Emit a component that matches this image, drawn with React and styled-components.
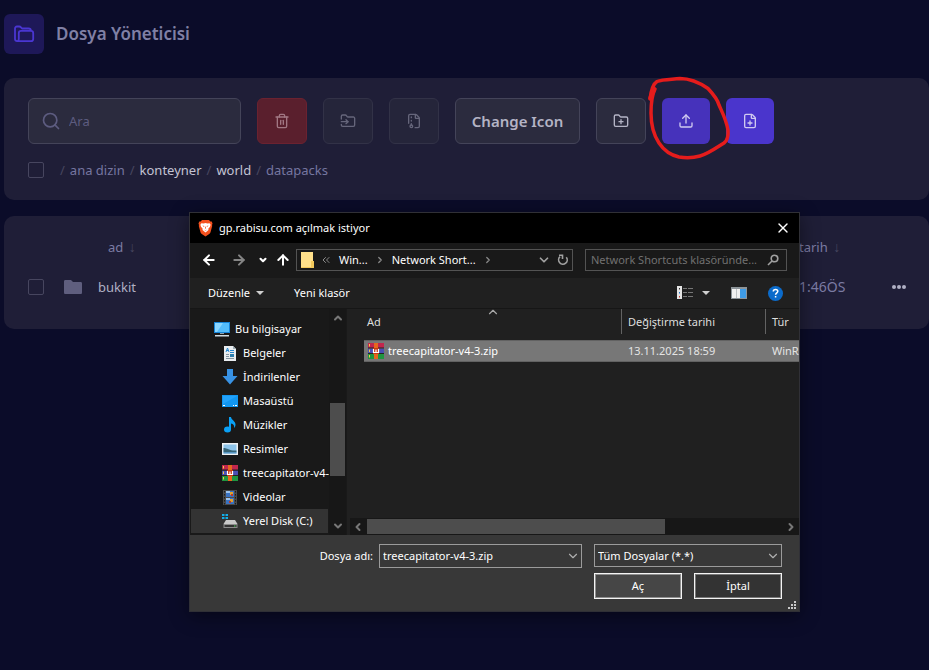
import React, { useState } from "react";
import styled, { createGlobalStyle } from "styled-components";
import {
  ArrowLeft, ArrowRight, ArrowUp, ChevronDown, ChevronLeft, ChevronRight, ChevronUp,
  ChevronsLeft, FileArchive, FilePlus, FolderInput, FolderPlus, RotateCw, Search, Trash2, Upload, X,
} from "lucide-react";

const GlobalStyle = createGlobalStyle`
* { box-sizing: border-box; }
body {
    margin: 0;
    background: #0b0c29;
    color: #b9b9cd;
    font-family: 'Noto Sans', 'Open Sans', sans-serif;
    font-size: 13px;
}
button, input, select { font: inherit; color: inherit; margin: 0; padding: 0; }
a { color: inherit; text-decoration: none; }
svg { display: block; flex: none; }
`;

const Page = styled.main`
position: relative;
min-height: 100vh;
padding: 14px 0 0 4px;
overflow: hidden;
`;

const Header = styled.header`
display: flex;
align-items: center;
gap: 12px;
margin-bottom: 24px;
`;

const HeaderIcon = styled.div`
display: flex;
align-items: center;
justify-content: center;
width: 40px;
height: 40px;
border-radius: 6px;
background: #1e1858;
color: #4a36d2;
`;

const Title = styled.h1`
margin: 0;
font-size: 17px;
font-weight: 600;
line-height: 24px;
color: #8080a5;
`;

const Card = styled.section`
margin-bottom: 16px;
border-radius: 10px;
background: #1f1e37;
padding: ${(props) => props.$pad};
`;

const Toolbar = styled.div`
display: flex;
gap: 16px;
margin-bottom: 16px;
`;

const SearchBox = styled.label`
display: flex;
align-items: center;
gap: 8px;
width: 213px;
height: 46px;
padding: 0 12px;
border: 1px solid #444459;
border-radius: 6px;
background: #2b2b3e;
color: #5d5c80;
`;

const SearchInput = styled.input`
flex: 1;
min-width: 0;
border: 0;
outline: 0;
background: transparent;
&::placeholder{ color: #5d5c80; opacity: 1; }
`;

const kinds = {
  danger: "background: #5a1f2d; border: 1px solid #6b2230; color: #a17783;",
  muted: "background: #25253a; border: 1px solid #323247; color: #66667b;",
  plain: "background: #2b2b3e; border: 1px solid #444459; color: #b4b4c5;",
  active: "background: #4632bb; border: 0; color: #d0caf0;",
  primary: "background: #4a35cc; border: 0; color: #d0caf0;",
};

const ToolButton = styled.button`
display: flex;
align-items: center;
justify-content: center;
width: ${(props) => props.$width || "50px"};
height: 46px;
border-radius: 6px;
font-size: 15px;
font-weight: 600;
${(props) => kinds[props.$kind]}
`;

const PathRow = styled.div`
display: flex;
align-items: center;
gap: 16px;
height: 20px;
`;

const Check = styled.input`
appearance: none;
display: block;
width: 16px;
height: 16px;
border: 1px solid #47465f;
border-radius: 2px;
background: transparent;
`;

const Crumbs = styled.nav`
display: flex;
gap: 5px;
line-height: 20px;
color: #47465f;
`;

const Crumb = styled.a`
color: ${(props) => (props.$strong ? "#c3c3d3" : "#7676a0")};
`;

const FileTable = styled.table`
width: 100%;
table-layout: fixed;
border-collapse: collapse;
th, td { padding: 0; text-align: left; font-weight: 400; color: #7b7ba3; }
th { height: 36px; }
td { height: 45px; font-size: 14px; }
th.name { padding-left: 10px; }
td.name { font-size: 13px; color: #b0b0c4; }
i { margin-left: 2px; font-size: 14px; font-style: normal; color: #47465f; }
`;

const DotsButton = styled.button`
display: flex;
border: 0;
background: transparent;
color: #b0b0c4;
margin-left: 23px;
`;

/* ---- file dialog ---- */

const Dialog = styled.section`
position: absolute;
left: 189px;
top: 212px;
width: 611px;
border: 1px solid #303036;
background: #191919;
color: #fff;
font-size: 11px;
line-height: 16px;
box-shadow: 0 4px 18px rgba(0,0,0,0.45);
`;

const TitleBar = styled.header`
display: flex;
align-items: center;
gap: 6px;
height: 30px;
padding: 0 8px;
background: #000;
`;

const DialogTitle = styled.h2`
flex: 1;
margin: 0;
font-size: 11px;
font-weight: 400;
`;

const BareButton = styled.button`
display: flex;
align-items: center;
gap: 6px;
border: 0;
background: transparent;
color: ${(props) => props.$color || "#fff"};
`;

const NavBar = styled.div`
display: flex;
align-items: center;
height: 35px;
padding: 0 12px 2px 11px;
gap: 12px;
`;

const NavArrows = styled.div`
display: grid;
grid-template-columns: 30px 27px 17px 21px;
align-items: center;
margin-right: -12px;
`;

const Address = styled.div`
display: flex;
align-items: center;
flex: 1;
gap: 6px;
height: 22px;
padding: 0 3px;
border: 1px solid #535353;
color: #8a8a8a;
`;

const AddressPath = styled.div`
display: flex;
align-items: center;
flex: 1;
gap: 7px;
`;

const DialogSearch = styled.label`
display: flex;
align-items: center;
width: 202px;
height: 22px;
padding: 0 7px 0 5px;
border: 1px solid #535353;
color: #a0a0a0;
`;

const DialogSearchInput = styled.input`
flex: 1;
min-width: 0;
border: 0;
outline: 0;
background: transparent;
&::placeholder{ color: #717171; opacity: 1; }
`;

const CommandBar = styled.div`
display: flex;
align-items: center;
height: 31px;
padding: 0 16px 0 18px;
border-bottom: 1px solid #161616;
background: #202020;
`;

const CommandGroup = styled.div`
display: flex;
align-items: center;
gap: ${(props) => props.$gap};
&:first-child{ flex: 1; }
`;

const Body = styled.div`
display: flex;
height: 226px;
`;

const Side = styled.ul`
width: 139px;
margin: 0;
padding: 8px 1px 0 1px;
list-style: none;
overflow: hidden;
`;

const SideItem = styled.li`
display: flex;
align-items: center;
gap: 5px;
height: 24px;
padding-left: ${(props) => (props.$root ? "23px" : "31px")};
white-space: nowrap;
background: ${(props) => (props.$selected ? "#333" : "transparent")};
`;

const SideScroll = styled.div`
display: flex;
flex-direction: column;
align-items: center;
justify-content: space-between;
width: 17px;
padding: 3px 0;
background: #171717;
color: #777;
`;

const SideThumb = styled.div`
width: 15px;
height: 73px;
margin-top: 73px;
margin-bottom: 39px;
background: #4d4d4d;
`;

const Pane = styled.div`
flex: 1;
min-width: 0;
display: flex;
flex-direction: column;
margin-left: 1px;
border-left: 3px solid #202020;
background: #202020;
`;

const PaneFiles = styled.div`
position: relative;
flex: 1;
padding-left: 14px;
overflow: hidden;
`;

const SortMark = styled.span`
position: absolute;
left: 136px;
top: -4px;
color: #a8a8a8;
`;

const PaneTable = styled.table`
width: 100%;
table-layout: fixed;
border-collapse: collapse;
th, td { padding: 0; text-align: left; font-weight: 400; white-space: nowrap; overflow: hidden; }
th { padding-bottom: 6px; color: #dedede; }
td { height: 21px; padding-left: 7px; background: #777; color: #e4e4e4; border: solid #626262; border-width: 1px 0; }
td:first-child { padding-left: 4px; color: #fff; }
`;

const HeadCell = styled.div`
height: 25px;
line-height: 25px;
padding-left: ${(props) => (props.$first ? "3px" : "6px")};
border-left: ${(props) => (props.$first ? "0" : "1px solid #636363")};
`;

const FileName = styled.div`
display: flex;
align-items: center;
gap: 4px;
`;

const PaneScroll = styled.div`
display: flex;
align-items: center;
height: 17px;
padding: 0 2px;
background: #171717;
color: #777;
`;

const PaneThumb = styled.div`
width: 298px;
height: 15px;
margin: 0 auto 0 3px;
background: #4d4d4d;
`;

const Footer = styled.footer`
display: grid;
gap: 5px;
padding: 9px 17px 12px;
background: #383838;
`;

const FooterRow = styled.div`
display: flex;
align-items: flex-start;
justify-content: flex-end;
gap: 12px;
`;

const NameField = styled.div`
display: flex;
align-items: center;
gap: 6px;
`;

const Combo = styled.div`
display: flex;
align-items: center;
width: ${(props) => props.$width};
height: ${(props) => props.$height};
padding: 0 1px 0 3px;
border: 1px solid #9b9b9b;
background: #383838;
color: #fff;
svg { color: #b0b0b0; }
input, select { flex: 1; min-width: 0; border: 0; outline: 0; background: transparent; appearance: none; }
`;

const DialogButton = styled.button`
width: 88px;
height: 26px;
border: 1px solid #f4f4f4;
box-shadow: inset 0 0 0 1px ${(props) => (props.$main ? "#8e8e8e" : "#777")};
background: ${(props) => (props.$main ? "#464646" : "#333")};
`;

const Grip = styled.svg`
position: absolute;
right: 3px;
bottom: 2px;
`;

const Marker = styled.svg`
position: absolute;
left: 640px;
top: 70px;
pointer-events: none;
`;

function FoldersIcon() {
  return (
    <svg width="22" height="18" viewBox="0 0 22 18" fill="none" stroke="currentColor" strokeWidth="1.8" strokeLinejoin="round">
      <path d="M4.5 16.2C2.6 16.2 2 15.4 2 14V3.5C2 2.3 2.7 1.5 4 1.5h2.2c.8 0 1.3.3 1.8.9l1 1.1h6.5c1.4 0 2.4.8 2.4 2.1" />
      <path d="M5.8 8c0-1.4.8-2.2 2.2-2.2h10c1.4 0 2.2.8 2.2 2.2v6c0 1.4-.8 2.2-2.2 2.2H4.5c.9-.3 1.3-1 1.3-2.2z" />
    </svg>
  );
}

function BraveIcon() {
  return (
    <svg width="15" height="18" viewBox="0 0 15 18">
      <path fill="#f4511e" d="M4 1h7l1.3 1.5 1.4-.1.8 2.2-.5 1.3.2 1.2-1.7 6.2c-.2.8-.7 1.3-1.3 1.8L7.5 17.5l-3.7-2.4c-.6-.5-1.1-1-1.3-1.8L.8 7.1 1 5.9.5 4.6 1.3 2.4l1.4.1z" />
      <path fill="#fff" d="m3.4 4.2 2.2.3 1.9-.4 1.9.4 2.2-.3 1 1.5-.6 2-1.7 2 .2 1.4-3 2.4-3-2.4.2-1.4-1.7-2-.6-2z" />
      <path fill="#f4511e" d="m4.4 6.5 2 .5-.4 1zM10.6 6.5l-2 .5.4 1zM7.5 7l.6 2.3-.6.5-.6-.5zM5.8 10.5l1.7.8 1.7-.8-1.7 1.3z" />
    </svg>
  );
}

function RarIcon() {
  return (
    <svg width="16" height="16" viewBox="0 0 16 16">
      <path fill="#c2274d" d="M0 0h16v5H0z" />
      <path fill="#4a4fb5" d="M0 5.5h16v5H0z" />
      <path fill="#1f9640" d="M0 11h16v5H0z" />
      <path fill="#242424" d="M0 4.6h16v1H0zM0 10h16v1H0z" />
      <path fill="#e6671e" d="M6 0h4v16H6z" />
      <path fill="#f4c945" d="M1 1h1v2.5H1zM1 6.5h1V9H1zM1 12h1v2.5H1z" />
      <path fill="#c63a13" d="M5 5h6v6H5z" />
      <path d="M5.5 6v3.5h5V6M8 6.5v3" fill="none" stroke="#fff" strokeWidth="1.2" />
    </svg>
  );
}

const sideIcons = {
  pc: (
    <>
      <path fill="#1685d9" d="M0 1h16v11H0z" />
      <path fill="#54bdfb" d="M1 2h14v9H1z" />
      <path fill="#8ad6ff" d="M1 2h8L3 11H1z" />
      <path fill="#8da2ae" d="M6 12h4v1H6z" />
      <path fill="#cfdbe2" d="M1 14h14v1.5H1z" />
    </>
  ),
  doc: (
    <>
      <path fill="#e9edf0" d="M2 1h9l3 3v12H2z" />
      <path fill="#a0afb8" d="m11 1 3 3h-3z" />
      <path d="m4 7 1.5-4L7 7M4.5 5.5h2M8 5.5h4M8 7.5h4" fill="none" stroke="#2386cf" />
      <path d="M4 9.5h3M4 11.5h3M4 13.5h8" stroke="#8294a0" />
      <path fill="#2e7fae" d="M8 9h4v3H8z" />
    </>
  ),
  down: <path fill="#3892e4" d="M5 0h6v7h4.500L8 15.500.500 7H5z" />,
  desktop: (
    <>
      <path fill="#1296f0" d="M0 2h16v12H0z" />
      <path fill="#22a2fb" d="M1 3h14L1 11z" />
      <path d="M1 12.5h2M11 12.5h1M13 12.5h2" stroke="#fff" />
    </>
  ),
  music: (
    <>
      <ellipse cx="5.5" cy="12.5" rx="3.5" ry="3" fill="#0aa0f5" />
      <path fill="#0aa0f5" d="M7 0h2c.3 3 4.5 4 4.5 7.500 0 1.500-.5 2.500-1.500 3.500.5-2.500-.5-4-3-4.500v6H7z" />
    </>
  ),
  image: (
    <>
      <path fill="#eef1f3" d="M0 2h16v12H0z" />
      <path fill="#8dc4ea" d="M1.5 3.5h13v9h-13z" />
      <path fill="#376577" d="M1.5 7c4 0 6 3 13 2.5V11h-13z" />
      <path fill="#5796c2" d="M1.5 11h13v1.5h-13z" />
    </>
  ),
  video: (
    <>
      <path fill="#4b4b4b" d="M1 1h14v15H1z" />
      <path d="M2.5 2v14M13.5 2v14" stroke="#1b1b1b" strokeDasharray="1.5 1.5" />
      <path fill="#3a73c2" d="M4 2h8v6H4zM4 9h8v6H4z" />
      <path fill="#9cc3ee" d="M4 2h4v2H4zM4 9h4v2H4z" />
      <path fill="#e2a22b" d="M8 3h3v3H8zM8 10h3v3H8z" />
      <path fill="#ba3c2e" d="M9 5h2v2H9zM7 12h2v2H7z" />
    </>
  ),
  disk: (
    <>
      <path fill="#13aee8" d="M0 1h2.5v2H0zM3.5 1H6v2H3.5zM0 4h2.5v2H0zM3.5 4H6v2H3.5z" />
      <path fill="#c9c9c9" d="M4 7h9l2.5 4H1.5z" />
      <path fill="#8b8b8b" d="M1.5 11h14v4h-14z" />
      <path fill="#333" d="M2.5 12h12v2h-12z" />
      <path fill="#4fd35c" d="M12 12.5h1.5v1H12z" />
    </>
  ),
};

const places = [
  ["pc", "Bu bilgisayar"],
  ["doc", "Belgeler"],
  ["down", "İndirilenler"],
  ["desktop", "Masaüstü"],
  ["music", "Müzikler"],
  ["image", "Resimler"],
  ["rar", "treecapitator-v4-3.zip"],
  ["video", "Videolar"],
  ["disk", "Yerel Disk (C:)"],
];

const Caret = () => (
  <svg width="8" height="4" viewBox="0 0 8 4"><path fill="#cfcfcf" d="M0 0h8L4 4z" /></svg>
);

function FileDialog() {
  const [name, setName] = useState("treecapitator-v4-3.zip");

  return (
    <Dialog role="dialog" aria-labelledby="dialog-title">
      <TitleBar>
        <BraveIcon />
        <DialogTitle id="dialog-title">gp.rabisu.com açılmak istiyor</DialogTitle>
        <BareButton aria-label="Kapat">
          <X size={16} strokeWidth={2} />
        </BareButton>
      </TitleBar>

      <NavBar>
        <NavArrows>
          <BareButton aria-label="Geri"><ArrowLeft size={16} strokeWidth={3} /></BareButton>
          <BareButton aria-label="İleri" $color="#858585"><ArrowRight size={16} strokeWidth={3} /></BareButton>
          <BareButton aria-label="Son konumlar"><ChevronDown size={10} strokeWidth={5} /></BareButton>
          <BareButton aria-label="Yukarı"><ArrowUp size={16} strokeWidth={3} /></BareButton>
        </NavArrows>
        <Address>
          <svg width="14" height="16" viewBox="0 0 14 16">
            <path fill="#ffe08a" d="M1 0h12v16H1z" />
            <path fill="#f2c85b" d="M11 9h3v7H1v-1h10z" />
          </svg>
          <AddressPath>
            <ChevronsLeft size={12} />
            <BareButton>Win...</BareButton>
            <ChevronRight size={10} strokeWidth={3} />
            <BareButton>Network Short...</BareButton>
            <ChevronRight size={10} strokeWidth={3} />
          </AddressPath>
          <BareButton aria-label="Önceki konumlar" $color="#a0a0a0"><ChevronDown size={14} strokeWidth={3} /></BareButton>
          <BareButton aria-label="Yenile" $color="#a0a0a0">
            <svg width="12" height="12" viewBox="0 0 12 12" fill="none" stroke="currentColor" strokeWidth="1.6">
              <path d="M3 2.7A4.300 4.300 0 1 0 9.300 3.200" />
              <path d="M2 1.300h3.500V5" />
            </svg>
          </BareButton>
        </Address>
        <DialogSearch>
          <DialogSearchInput aria-label="Klasörde ara" placeholder="Network Shortcuts klasöründe..." />
          <svg width="12" height="12" viewBox="0 0 12 12" fill="none" stroke="currentColor" strokeWidth="1.6">
            <circle cx="7.5" cy="4.5" r="3.3" />
            <path d="M5 7 1 11" />
          </svg>
        </DialogSearch>
      </NavBar>

      <CommandBar>
        <CommandGroup $gap="30px">
          <BareButton>Düzenle <Caret /></BareButton>
          <BareButton>Yeni klasör</BareButton>
        </CommandGroup>
        <CommandGroup $gap="21px">
          <BareButton aria-label="Görünüm">
            <svg width="19" height="14" viewBox="0 0 19 14">
              <path fill="#e5e5e5" d="M0 0h5v13H0z" />
              <path d="M6 2.5h4M11 2.5h5M6 6.5h4M11 6.5h5M6 10.5h4M11 10.5h5" stroke="#777" />
              <path fill="#333" d="M2 2h1v1.500H2z" />
              <path fill="#2874c8" d="M2 6h1v1.500H2z" />
              <path fill="#c43a31" d="M2 10h1v1.500H2z" />
            </svg>
            <Caret />
          </BareButton>
          <BareButton aria-label="Önizleme bölmesi">
            <svg width="16" height="12" viewBox="0 0 16 12">
              <path fill="#8d9499" d="M0 0h16v12H0z" />
              <path fill="#f2f2f2" d="M1 2h4v9H1zM5.5 2H9v9H5.500z" />
              <path fill="#3e9be6" d="M9 2h6v9H9z" />
            </svg>
          </BareButton>
          <BareButton aria-label="Yardım">
            <svg width="15" height="15" viewBox="0 0 15 15">
              <circle cx="7.5" cy="7.5" r="7.5" fill="#0b6bcb" />
              <path d="M5.3 5.4c0-1.300 1-2 2.300-2s2.200.8 2.200 1.900c0 1.500-2.200 1.700-2.200 3.500M7.600 10v1.600" fill="none" stroke="#fff" strokeWidth="1.5" />
            </svg>
          </BareButton>
        </CommandGroup>
      </CommandBar>

      <Body>
        <Side>
          {places.map(([icon, label]) => (
            <SideItem key={icon} $root={icon === "pc"} $selected={icon === "disk"}>
              {icon === "rar" ? <RarIcon /> : <svg width="16" height="16" viewBox="0 0 16 16">{sideIcons[icon]}</svg>}
              {label}
            </SideItem>
          ))}
        </Side>
        <SideScroll>
          <ChevronUp size={12} strokeWidth={4} />
          <SideThumb />
          <ChevronDown size={12} strokeWidth={4} />
        </SideScroll>
        <Pane>
          <PaneFiles>
            <PaneTable>
              <colgroup><col width="257" /><col width="144" /><col /></colgroup>
              <thead>
                <tr>
                  <th><HeadCell $first>Ad</HeadCell></th>
                  <th><HeadCell>Değiştirme tarihi</HeadCell></th>
                  <th><HeadCell>Tür</HeadCell></th>
                </tr>
              </thead>
              <tbody>
                <tr>
                  <td><FileName><RarIcon />treecapitator-v4-3.zip</FileName></td>
                  <td>13.11.2025 18:59</td>
                  <td>WinRAR</td>
                </tr>
              </tbody>
            </PaneTable>
            <SortMark><ChevronUp size={14} strokeWidth={2} /></SortMark>
          </PaneFiles>
          <PaneScroll>
            <ChevronLeft size={12} strokeWidth={4} />
            <PaneThumb />
            <ChevronRight size={12} strokeWidth={4} />
          </PaneScroll>
        </Pane>
      </Body>

      <Footer>
        <FooterRow>
          <NameField>
            <label htmlFor="file-name">Dosya adı:</label>
            <Combo $width="203px" $height="24px">
              <input id="file-name" value={name} onChange={(e) => setName(e.target.value)} />
              <ChevronDown size={14} />
            </Combo>
          </NameField>
          <Combo $width="188px" $height="23px">
            <select aria-label="Dosya türü">
              <option>Tüm Dosyalar (*.*)</option>
            </select>
            <ChevronDown size={14} />
          </Combo>
        </FooterRow>
        <FooterRow>
          <DialogButton $main>Aç</DialogButton>
          <DialogButton>İptal</DialogButton>
        </FooterRow>
      </Footer>
      <Grip width="8" height="8" viewBox="0 0 8 8" fill="#c8c8c8">
        <path d="M6 0h2v2H6zM3 3h2v2H3zM6 3h2v2H6zM0 6h2v2H0zM3 6h2v2H3zM6 6h2v2H6z" />
      </Grip>
    </Dialog>
  );
}

export default function App() {
  return (
    <Page>
      <GlobalStyle />
      <Header>
        <HeaderIcon><FoldersIcon /></HeaderIcon>
        <Title>Dosya Yöneticisi</Title>
      </Header>

      <Card $pad="20px 24px">
        <Toolbar>
          <SearchBox>
            <Search size={20} />
            <SearchInput aria-label="Ara" placeholder="Ara" />
          </SearchBox>
          <ToolButton $kind="danger" aria-label="Sil"><Trash2 size={16} /></ToolButton>
          <ToolButton $kind="muted" aria-label="Taşı"><FolderInput size={16} /></ToolButton>
          <ToolButton $kind="muted" aria-label="Arşivle"><FileArchive size={16} /></ToolButton>
          <ToolButton $kind="plain" $width="125px">Change Icon</ToolButton>
          <ToolButton $kind="plain" aria-label="Yeni klasör"><FolderPlus size={16} /></ToolButton>
          <ToolButton $kind="active" $width="48px" aria-label="Yükle"><Upload size={16} /></ToolButton>
          <ToolButton $kind="primary" $width="48px" aria-label="Yeni dosya"><FilePlus size={16} /></ToolButton>
        </Toolbar>
        <PathRow>
          <Check type="checkbox" aria-label="Tümünü seç" />
          <Crumbs>
            /<Crumb href="#home">ana dizin</Crumb>
            /<Crumb href="#konteyner" $strong>konteyner</Crumb>
            /<Crumb href="#world" $strong>world</Crumb>
            /<Crumb href="#datapacks">datapacks</Crumb>
          </Crumbs>
        </PathRow>
      </Card>

      <Card $pad="12px 0 20px 24px">
        <FileTable>
          <colgroup><col width="36" /><col width="34" /><col /><col width="70" /><col width="60" /></colgroup>
          <thead>
            <tr>
              <th /><th />
              <th className="name">ad <i>↓</i></th>
              <th>tarih <i>↓</i></th>
              <th />
            </tr>
          </thead>
          <tbody>
            <tr>
              <td><Check type="checkbox" aria-label="bukkit" /></td>
              <td>
                <svg width="18" height="14" viewBox="0 0 18 14"><path fill="#5f5e7e" d="M1.5 0H7l2 2h7.5c1 0 1.5.5 1.5 1.5v9c0 1-.5 1.5-1.5 1.5h-15C.5 14 0 13.5 0 12.5v-11C0 .5.5 0 1.5 0z" /></svg>
              </td>
              <td className="name">bukkit</td>
              <td>1:46ÖS</td>
              <td>
                <DotsButton aria-label="Seçenekler">
                  <svg width="14" height="4" viewBox="0 0 14 4" fill="currentColor">
                    <circle cx="2" cy="2" r="2" /><circle cx="7" cy="2" r="2" /><circle cx="12" cy="2" r="2" />
                  </svg>
                </DotsButton>
              </td>
            </tr>
          </tbody>
        </FileTable>
      </Card>

      <FileDialog />

      <Marker width="96" height="96" viewBox="640 70 96 96" fill="none" stroke="#e51c1c" strokeLinecap="round" strokeLinejoin="round">
        <path strokeWidth="3.5" d="M650 99C651 91 653 84 657 81.500C663 79 672 79.500 680 78.500C689 78.500 700 83 708 88.500C714 95 718 101 719 105C722 112 726 119 728 130C728.500 136 728 140 724 143C716 148 708 154 700 156C693 158 685 158 679 157C670 155 663 149 659 143C653 134 651 123 651 113C651 103 652 95 655 89" />
        <path strokeWidth="4.5" d="M650.500 98 654 89" />
      </Marker>
    </Page>
  );
}
